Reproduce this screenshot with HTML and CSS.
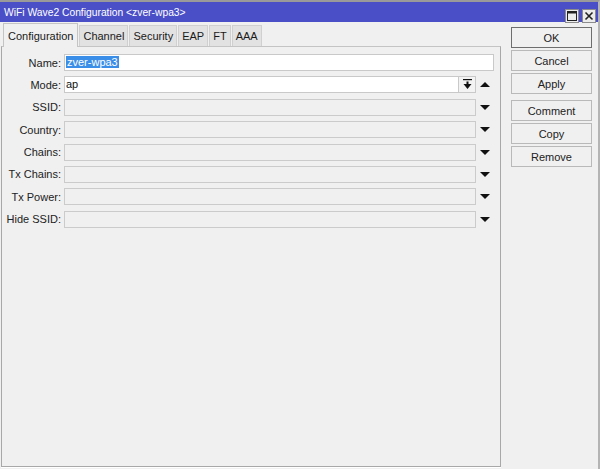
FILE: index.html
```html
<!DOCTYPE html>
<html lang="en">
<head>
    <meta charset="UTF-8">
    <title>WiFi Wave2 Configuration</title>
    <link rel="stylesheet" href="styles.css">
</head>
<body>
    <div class="window">
        <div class="titlebar">
            <span class="title">WiFi Wave2 Configuration &lt;zver-wpa3&gt;</span>
            <div class="winbtns">
                <div class="winbtn">
                    <svg width="12" height="12" viewBox="0 0 12 12"><rect x="1.5" y="1.5" width="9" height="9" fill="none" stroke="#222" stroke-width="1"/><line x1="1" y1="2.5" x2="11" y2="2.5" stroke="#222" stroke-width="2"/></svg>
                </div>
                <div class="winbtn">
                    <svg width="12" height="12" viewBox="0 0 12 12"><path d="M2.5 2.5 L9.5 9.5 M9.5 2.5 L2.5 9.5" stroke="#222" stroke-width="1.6"/></svg>
                </div>
            </div>
        </div>

        <div class="content">
            <div class="main">
                <div class="tabs">
                    <div class="tab active">Configuration</div>
                    <div class="tab">Channel</div>
                    <div class="tab">Security</div>
                    <div class="tab">EAP</div>
                    <div class="tab">FT</div>
                    <div class="tab">AAA</div>
                </div>
                <div class="panel">
                    <div class="row">
                        <label>Name:</label>
                        <div class="field"><div class="input"><span class="sel">zver-wpa3</span></div></div>
                    </div>
                    <div class="row">
                        <label>Mode:</label>
                        <div class="field">
                            <div class="input">ap</div>
                            <div class="dropbtn">
                                <svg width="9" height="11" viewBox="0 0 9 11"><rect x="0" y="0" width="9" height="1.2" fill="#111"/><rect x="3.5" y="2.5" width="2" height="3" fill="#111"/><path d="M0.5 5 L8.5 5 L4.5 10 Z" fill="#111"/></svg>
                            </div>
                            <div class="arrow"><span class="tri up"></span></div>
                        </div>
                    </div>
                    <div class="row">
                        <label>SSID:</label>
                        <div class="field"><div class="input off"></div><div class="arrow"><span class="tri"></span></div></div>
                    </div>
                    <div class="row">
                        <label>Country:</label>
                        <div class="field"><div class="input off"></div><div class="arrow"><span class="tri"></span></div></div>
                    </div>
                    <div class="row">
                        <label>Chains:</label>
                        <div class="field"><div class="input off"></div><div class="arrow"><span class="tri"></span></div></div>
                    </div>
                    <div class="row">
                        <label>Tx Chains:</label>
                        <div class="field"><div class="input off"></div><div class="arrow"><span class="tri"></span></div></div>
                    </div>
                    <div class="row">
                        <label>Tx Power:</label>
                        <div class="field"><div class="input off"></div><div class="arrow"><span class="tri"></span></div></div>
                    </div>
                    <div class="row">
                        <label>Hide SSID:</label>
                        <div class="field"><div class="input off"></div><div class="arrow"><span class="tri"></span></div></div>
                    </div>
                </div>
            </div>

            <div class="side">
                <div class="btn default">OK</div>
                <div class="btn">Cancel</div>
                <div class="btn">Apply</div>
                <div class="btn sep">Comment</div>
                <div class="btn">Copy</div>
                <div class="btn">Remove</div>
            </div>
        </div>
    </div>
</body>
</html>
```

FILE: styles.css
```css
* {
    box-sizing: border-box;
}
body {
    margin: 0;
    background: #f0f0f0;
    font-family: "Liberation Sans", Arial, sans-serif;
    font-size: 11px;
    color: #1a1a1a;
}
.window {
    width: 600px;
    height: 469px;
    border-top: 2px solid #9a9a9a;
    border-right: 2px solid #b4b4b4;
    background: #f0f0f0;
}
.titlebar {
    height: 20px;
    background: #4b4fc7;
    display: flex;
    align-items: center;
    justify-content: space-between;
    padding: 0 2px 0 4px;
}
.title {
    color: #fff;
    font-size: 10.3px;
}
.winbtns {
    display: flex;
    gap: 3px;
    margin-top: 7px;
}
.winbtn {
    width: 14px;
    height: 14px;
    background: #ececec;
    border: 1px solid #8c8c8c;
    display: flex;
    align-items: center;
    justify-content: center;
}
.content {
    display: flex;
}
.main {
    width: 500px;
    margin-left: 1px;
}
.tabs {
    display: flex;
    align-items: flex-end;
    height: 24px;
    padding-left: 2px;
    position: relative;
    z-index: 1;
}
.tab {
    height: 21px;
    padding: 0 3px;
    display: flex;
    align-items: center;
    background: #e2e2e2;
    border: 1px solid #d0d0d0;
    border-bottom: none;
    margin-right: 1px;
    font-size: 11px;
}
.tab.active {
    height: 24px;
    margin-bottom: -1px;
    background: #f0f0f0;
    border-color: #c4c4c4;
    padding: 0 4px;
}
.panel {
    height: 421px;
    border: 1px solid #a8a8a8;
    border-top-color: #c4c4c4;
    box-shadow: 0 1px 0 #fff;
    padding-top: 7px;
    display: flex;
    flex-direction: column;
    gap: 5.4px;
}
.row {
    display: flex;
    align-items: center;
    height: 17px;
}
.row label {
    width: 60px;
    text-align: right;
    padding-right: 1px;
    font-size: 11px;
    color: #222;
}
.field {
    display: flex;
    align-items: center;
    margin-left: 2px;
    width: 430px;
    height: 17px;
}
.input {
    flex: 1;
    height: 17px;
    background: #fff;
    border: 1px solid #c9c9c9;
    padding: 0 1px;
    font-size: 11px;
    line-height: 15px;
    color: #111;
}
.input.off {
    background: #f0f0f0;
    border-color: #cbcbcb;
}
.sel {
    background: #3a8ee8;
    color: #fff;
    padding: 0 1px;
}
.dropbtn {
    width: 17px;
    height: 17px;
    border: 1px solid #c9c9c9;
    border-left: none;
    background: #f3f3f3;
    display: flex;
    align-items: center;
    justify-content: center;
}
.arrow {
    width: 18px;
    display: flex;
    justify-content: center;
}
.tri {
    width: 0;
    height: 0;
    border-left: 5px solid transparent;
    border-right: 5px solid transparent;
    border-top: 5px solid #111;
}
.tri.up {
    border-top: none;
    border-bottom: 5px solid #111;
}
.side {
    width: 81px;
    margin-left: 10px;
    padding-top: 5px;
    display: flex;
    flex-direction: column;
    gap: 2px;
}
.btn {
    height: 21px;
    border: 1px solid #b9b9b9;
    background: #f0f0f0;
    display: flex;
    align-items: center;
    justify-content: center;
    font-size: 11px;
    color: #222;
}
.btn.default {
    border-color: #6e6e6e;
}
.btn.sep {
    margin-top: 4px;
}
```
